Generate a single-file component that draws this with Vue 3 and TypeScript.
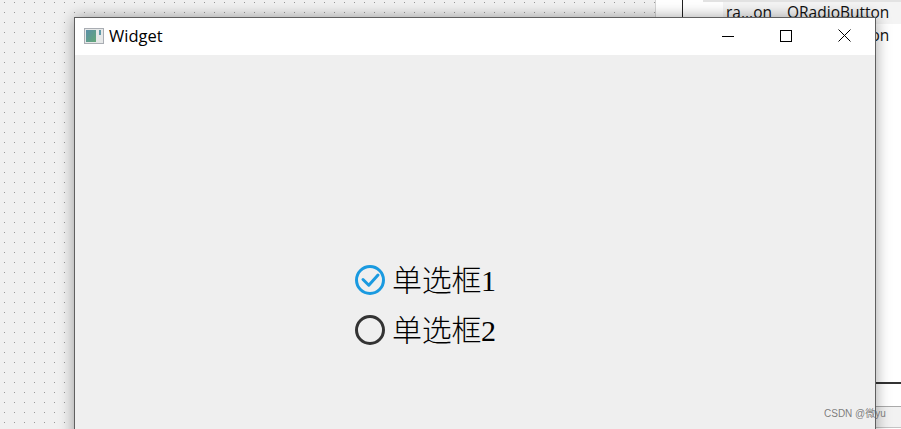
<script setup lang="ts">
type RadioItem = { id: number; label: string; checked: boolean };

const radios: RadioItem[] = [
	{ id: 1, label: '单选框1', checked: true },
	{ id: 2, label: '单选框2', checked: false },
];
</script>

<template>
	<div class="desktop">
		<div class="canvas"></div>
		<aside class="props">
			<div class="props__rail"></div>
			<div class="props__main">
				<div class="props__band"></div>
				<div class="props__row props__row--active">
					<span class="props__name">ra...on</span>
					<span class="props__class">QRadioButton</span>
				</div>
				<div class="props__row">
					<span class="props__name">ra...on</span>
					<span class="props__class">QRadioButton</span>
				</div>
			</div>
			<div class="props__lower"></div>
		</aside>

		<section class="window">
			<header class="titlebar">
				<svg class="titlebar__icon" width="20" height="16" viewBox="0 0 20 16">
					<defs>
						<linearGradient id="pane" x1="0" y1="0" x2="1" y2="1">
							<stop offset="0" stop-color="#5b8fa8" />
							<stop offset="1" stop-color="#63a878" />
						</linearGradient>
					</defs>
					<rect x="0.5" y="0.5" width="19" height="15" fill="#e6e8e8" stroke="#a9adb3" />
					<rect x="2" y="2" width="10" height="12" fill="url(#pane)" />
					<rect x="15" y="2" width="2" height="5" fill="#5f9aa8" />
				</svg>
				<span class="titlebar__text">Widget</span>
				<div class="titlebar__controls">
					<button class="ctrl">
						<svg width="12" height="12" viewBox="0 0 12 12"><path d="M0 6.5H12" stroke="#000" fill="none" /></svg>
					</button>
					<button class="ctrl">
						<svg width="12" height="12" viewBox="0 0 12 12"><rect x="0.5" y="0.5" width="11" height="11" stroke="#000" fill="none" /></svg>
					</button>
					<button class="ctrl">
						<svg width="13" height="13" viewBox="0 0 13 13"><path d="M0.5 0.5L12.5 12.5M12.5 0.5L0.5 12.5" stroke="#000" fill="none" /></svg>
					</button>
				</div>
			</header>
			<div class="window__body">
				<label v-for="item in radios" :key="item.id" class="radio">
					<svg v-if="item.checked" width="30" height="30" viewBox="0 0 30 30">
						<circle cx="15" cy="15" r="13.5" fill="none" stroke="#1a9ae0" stroke-width="3" />
						<path d="M8 14.5L13.8 20.2L23 10" fill="none" stroke="#1a9ae0" stroke-width="3" stroke-linecap="round" stroke-linejoin="round" />
					</svg>
					<svg v-else width="30" height="30" viewBox="0 0 30 30">
						<circle cx="15" cy="15" r="13.5" fill="none" stroke="#333" stroke-width="3" />
					</svg>
					<span class="radio__label">{{ item.label }}</span>
				</label>
			</div>
		</section>

		<span class="watermark">CSDN @微yu</span>
	</div>
</template>

<style scoped>
.desktop {
	position: relative;
	display: flex;
	width: 901px;
	height: 429px;
	overflow: hidden;
	background: #f0f0f0;
	font-family: "Open Sans", "Noto Sans", sans-serif;
}

.canvas {
	flex: 0 0 655px;
	background-image: radial-gradient(circle at 4.5px 2.5px, #9a9a9a 0.75px, transparent 1px);
	background-size: 10px 10px;
}

.props {
	position: relative;
	flex: 1;
	background: #fff;
	border-left: 1px solid #d4d4d4;
}

.props__rail {
	position: absolute;
	left: 26px;
	top: 0;
	width: 1px;
	height: 18px;
	background: #222;
}

.props__main {
	margin-left: 47px;
}

.props__band {
	height: 2px;
	background: #e3e3e3;
}

.props__row {
	display: flex;
	gap: 16px;
	height: 22px;
	margin-left: 20px;
	padding-left: 3px;
	font-size: 15.5px;
	line-height: 21px;
	color: #111;
}

.props__row + .props__row {
	padding-top: 1px;
}

.props__row--active {
	background: #f4f4f4;
}

.props__name {
	width: 45px;
	white-space: nowrap;
}

.props__lower {
	position: absolute;
	left: 0;
	right: 0;
	top: 382px;
	height: 43px;
	border-top: 2px solid #333;
	border-bottom: 1px solid #c4c4c4;
	background: linear-gradient(#fff 0, #fff 22px, #aaa 22px, #aaa 23px, #f2f2f2 23px);
}

.window {
	position: absolute;
	left: 74px;
	top: 17px;
	width: 802px;
	height: 430px;
	display: flex;
	flex-direction: column;
	box-sizing: border-box;
	border: 1px solid #5f5f5f;
	background: #efefef;
	box-shadow: 0 0 14px rgba(0, 0, 0, 0.36);
}

.titlebar {
	display: flex;
	align-items: center;
	height: 37px;
	padding: 0 1px 2px 9px;
	box-sizing: border-box;
	background: #fff;
}

.titlebar__icon {
	margin-right: 5px;
}

.titlebar__text {
	font-size: 16.5px;
	color: #000;
}

.titlebar__controls {
	display: flex;
	margin-left: auto;
}

.ctrl {
	display: flex;
	align-items: center;
	justify-content: center;
	width: 58.5px;
	height: 35px;
	padding: 0;
	border: 0;
	background: none;
}

.window__body {
	display: flex;
	flex-direction: column;
	gap: 20px;
	padding: 210px 0 0 280px;
}

.radio {
	display: flex;
	align-items: center;
	gap: 7px;
	height: 30px;
}

.radio__label {
	padding-top: 2px;
	font-family: "Liberation Serif", "Noto Sans CJK SC", serif;
	font-size: 30px;
	line-height: 30px;
	font-weight: 300;
	letter-spacing: -0.3px;
	color: #000;
}

.watermark {
	position: absolute;
	left: 824px;
	top: 407px;
	font-family: "Liberation Sans", "Noto Sans CJK SC", sans-serif;
	font-size: 10px;
	line-height: 14px;
	color: rgba(96, 96, 96, 0.8);
	white-space: nowrap;
}
</style>
